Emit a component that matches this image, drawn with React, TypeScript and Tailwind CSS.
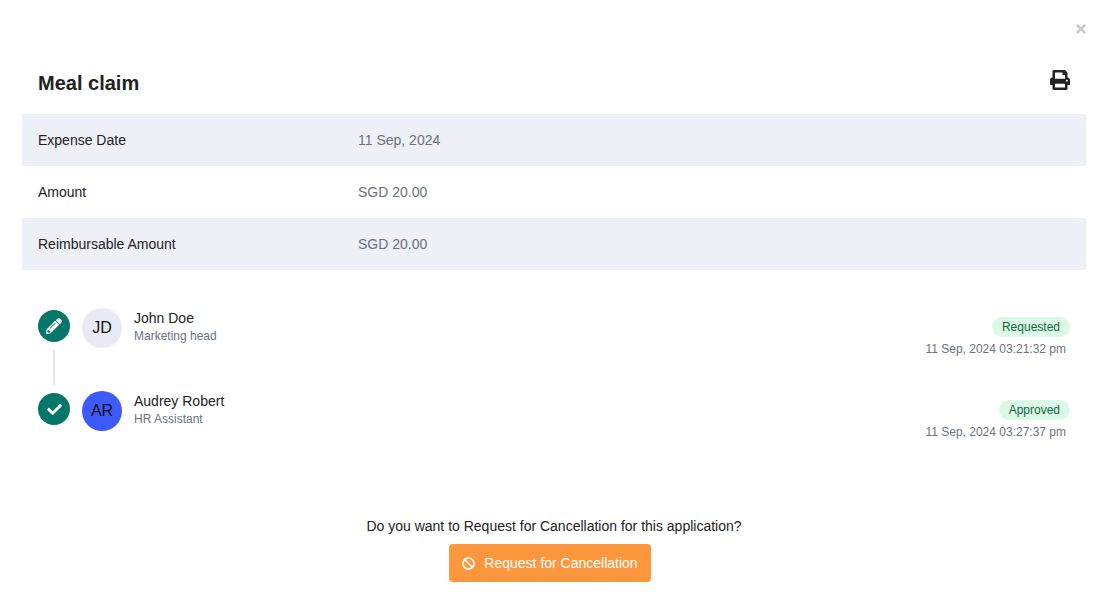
import React from "react";
import { FaPrint, FaPencilAlt, FaCheck, FaBan, FaTimes } from "react-icons/fa";

const rows = [
  { label: "Expense Date", value: "11 Sep, 2024", bg: "bg-[#edf0f7]" },
  { label: "Amount", value: "SGD 20.00", bg: "bg-white" },
  { label: "Reimbursable Amount", value: "SGD 20.00", bg: "bg-[#edf0f7]" },
];

function Step(props: { icon: React.ReactNode; initials: string; avatar: string; name: string; role: string; status: string; date: string; line: boolean }) {
  return (
    <div className="flex h-[83px] items-start px-4">
      <div className="flex h-full w-[32px] flex-col items-center pt-[2px]">
        <div className="flex h-[32px] w-[32px] items-center justify-center rounded-full bg-[#04776b] text-white">{props.icon}</div>
        {props.line && <div className="mt-[8px] h-[35px] w-[2px] bg-[#e5e7eb]" />}
      </div>
      <div className={`ml-3 flex h-[40px] w-[40px] items-center justify-center rounded-full text-[16px] text-[#111] ${props.avatar}`}>{props.initials}</div>
      <div className="ml-3 flex flex-col">
        <div className="text-[14px] leading-[20px] text-[#222]">{props.name}</div>
        <div className="text-[12px] leading-[16px] text-[#6b7280]">{props.role}</div>
      </div>
      <div className="ml-auto flex flex-col items-end">
        <div className="mt-[9px] flex h-[20px] items-center rounded-full bg-[#dcf8e7] px-[10px] text-[12px] text-[#116a3a]">{props.status}</div>
        <div className="mt-[2px] pr-[4px] text-[12px] leading-[20px] text-[#6b7280]">{props.date}</div>
      </div>
    </div>
  );
}

export default function App() {
  return (
    <div className="relative h-[616px] w-[1098px] overflow-hidden bg-white pl-[22px] pr-[12px] pt-[66px] font-['Liberation_Sans',Arial,sans-serif]">
      <div className="absolute right-[10px] top-[22px] text-[#c9c9c9]"><FaTimes size={14} /></div>
      <div className="flex h-[34px] items-center justify-between px-4">
        <div className="text-[20px] font-bold text-[#222]">Meal claim</div>
        <FaPrint size={20} className="mb-[6px] text-[#222]" />
      </div>
      <div className="mt-[14px]">
        {rows.map((r) => (
          <div key={r.label} className={`flex h-[52px] items-center px-4 text-[14px] ${r.bg}`}>
            <div className="w-[320px] text-[#222]">{r.label}</div>
            <div className="text-[#6b7280]">{r.value}</div>
          </div>
        ))}
      </div>
      <div className="mt-[38px]">
        <Step icon={<FaPencilAlt size={16} />} initials="JD" avatar="bg-[#e8eaf6]" name="John Doe" role="Marketing head" status="Requested" date="11 Sep, 2024 03:21:32 pm" line />
        <Step icon={<FaCheck size={15} />} initials="AR" avatar="bg-[#3d5afe]" name="Audrey Robert" role="HR Assistant" status="Approved" date="11 Sep, 2024 03:27:37 pm" line={false} />
      </div>
      <div className="mt-[42px] flex flex-col items-center">
        <div className="text-[14px] leading-[21px] text-[#222]">Do you want to Request for Cancellation for this application?</div>
        <button className="mr-[8px] mt-[7px] flex h-[38px] w-[202px] items-center justify-center gap-[9px] rounded-[4px] bg-[#fd973e] text-[14px] text-white">
          <FaBan size={13} />
          Request for Cancellation
        </button>
      </div>
    </div>
  );
}
